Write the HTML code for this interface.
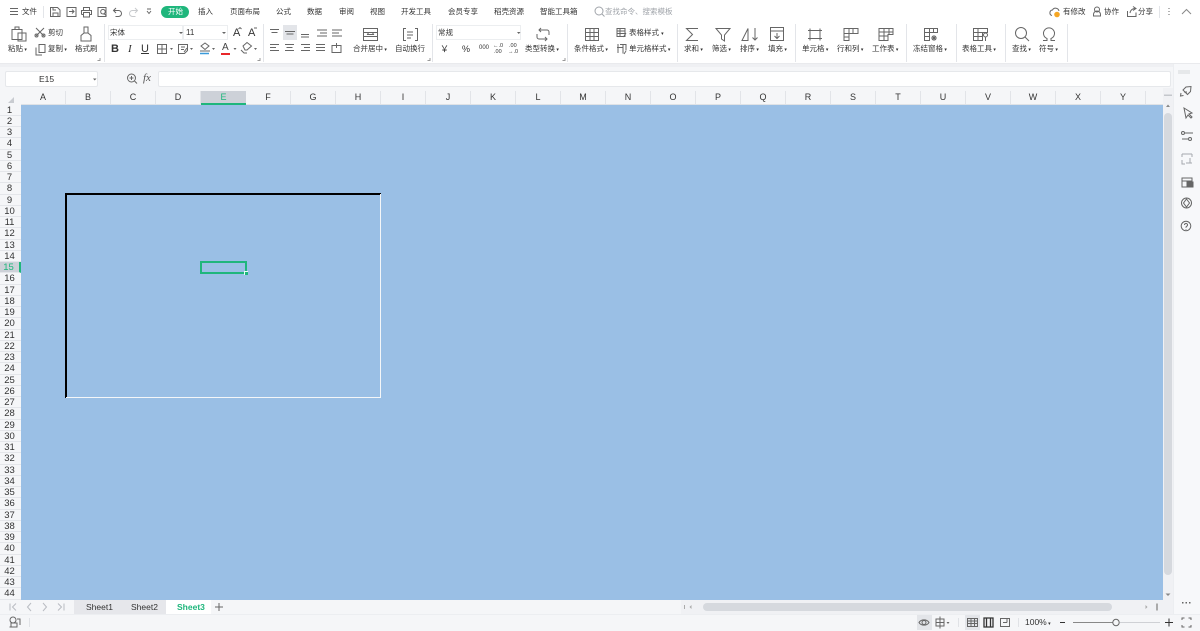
<!DOCTYPE html>
<html lang="zh">
<head>
<meta charset="utf-8">
<title>Sheet</title>
<style>
html{background:#f5f6f8}
html,body{margin:0;padding:0;width:1200px;height:631px;overflow:hidden}
body{position:relative;background:#f5f6f8;font-family:"Liberation Sans","Noto Sans CJK SC",sans-serif;filter:blur(.3px)}
div,span{position:absolute;box-sizing:border-box}
.t{white-space:nowrap;font-size:7.5px;line-height:12px;color:#333;height:12px}
.c{white-space:nowrap;font-size:9px;line-height:13px;color:#333;top:91px;width:45px;height:13px;text-align:center;border-right:1px solid #e2e4e8}
.r{white-space:nowrap;font-size:9.5px;line-height:11px;color:#333;left:0;width:21px;height:11.25px;text-align:center;padding-right:2px;background:#f5f6f8;border-bottom:1px solid #e4e6ea}
svg{position:absolute;left:0;top:0;fill:none;stroke:#666;stroke-width:1}
svg .f{fill:#666;stroke:none}
</style>
</head>
<body>
<div style="left:0;top:0;width:1200px;height:64px;background:#fff;border-bottom:1px solid #e9eaed"></div>
<div style="left:0;top:64px;width:1200px;height:3px;background:#eff0f3"></div>
<div style="left:161px;top:6px;width:28px;height:12px;border-radius:6px;background:#1fb67c"></div>
<span class="t" style="left:168px;top:6px;color:#fff">开始</span>
<span class="t" style="left:22px;top:6px">文件</span>
<span class="t" style="left:198px;top:6px">插入</span>
<span class="t" style="left:230px;top:6px">页面布局</span>
<span class="t" style="left:276px;top:6px">公式</span>
<span class="t" style="left:307px;top:6px">数据</span>
<span class="t" style="left:339px;top:6px">审阅</span>
<span class="t" style="left:370px;top:6px">视图</span>
<span class="t" style="left:401px;top:6px">开发工具</span>
<span class="t" style="left:448px;top:6px">会员专享</span>
<span class="t" style="left:494px;top:6px">稻壳资源</span>
<span class="t" style="left:540px;top:6px">智能工具箱</span>
<span class="t" style="left:605px;top:6px;color:#a0a4aa">查找命令、搜索模板</span>
<span class="t" style="left:1063px;top:6px">有修改</span>
<span class="t" style="left:1104px;top:6px">协作</span>
<span class="t" style="left:1138px;top:6px">分享</span>

<div style="left:283px;top:25px;width:14px;height:15px;background:#e3e5e9"></div>
<div style="left:108px;top:25px;width:75px;height:15px;background:#fff;border:1px solid #eceef0"></div>
<div style="left:183px;top:25px;width:45px;height:15px;background:#fff;border:1px solid #eceef0"></div>
<div style="left:436px;top:25px;width:85px;height:15px;background:#fff;border:1px solid #eceef0"></div>
<span class="t" style="left:110px;top:27px">宋体</span>
<span class="t" style="left:186px;top:27px;font-size:8px">11</span>
<span class="t" style="left:438px;top:27px">常规</span>

<span class="t" style="left:48px;top:27px">剪切</span>
<span class="t" style="left:629px;top:27px">表格样式 <small style="font-size:5px">▾</small></span>
<span class="t" style="left:8px;top:43px">粘贴<small style="font-size:5px"> ▾</small></span>
<span class="t" style="left:48px;top:43px">复制<small style="font-size:5px"> ▾</small></span>
<span class="t" style="left:75px;top:43px">格式刷</span>
<span class="t" style="left:353px;top:43px">合并居中<small style="font-size:5px"> ▾</small></span>
<span class="t" style="left:395px;top:43px">自动换行</span>
<span class="t" style="left:525px;top:43px">类型转换<small style="font-size:5px"> ▾</small></span>
<span class="t" style="left:574px;top:43px">条件格式<small style="font-size:5px"> ▾</small></span>
<span class="t" style="left:629px;top:43px">单元格样式<small style="font-size:5px"> ▾</small></span>
<span class="t" style="left:684px;top:43px">求和<small style="font-size:5px"> ▾</small></span>
<span class="t" style="left:712px;top:43px">筛选<small style="font-size:5px"> ▾</small></span>
<span class="t" style="left:740px;top:43px">排序<small style="font-size:5px"> ▾</small></span>
<span class="t" style="left:768px;top:43px">填充<small style="font-size:5px"> ▾</small></span>
<span class="t" style="left:802px;top:43px">单元格<small style="font-size:5px"> ▾</small></span>
<span class="t" style="left:837px;top:43px">行和列<small style="font-size:5px"> ▾</small></span>
<span class="t" style="left:872px;top:43px">工作表<small style="font-size:5px"> ▾</small></span>
<span class="t" style="left:913px;top:43px">冻结窗格<small style="font-size:5px"> ▾</small></span>
<span class="t" style="left:962px;top:43px">表格工具<small style="font-size:5px"> ▾</small></span>
<span class="t" style="left:1012px;top:43px">查找<small style="font-size:5px"> ▾</small></span>
<span class="t" style="left:1039px;top:43px">符号<small style="font-size:5px"> ▾</small></span>

<span class="t" style="left:111px;top:43px;font-size:11px;font-weight:bold;color:#333">B</span>
<span class="t" style="left:128px;top:43px;font-size:11px;font-style:italic;font-family:'Liberation Serif',serif">I</span>
<span class="t" style="left:141px;top:43px;font-size:11px;text-decoration:underline">U</span>
<span class="t" style="left:222px;top:42px;font-size:10px;color:#444">A</span>
<span class="t" style="left:233px;top:27px;font-size:11px">A</span>
<span class="t" style="left:248px;top:27px;font-size:11px">A</span>
<span class="t" style="left:440px;top:43px;font-size:9px">￥</span>
<span class="t" style="left:462px;top:43px;font-size:9px">%</span>
<span class="t" style="left:479px;top:42px;font-size:6px">000</span>
<span class="t" style="left:493px;top:40px;font-size:5.500px">←.0</span>
<span class="t" style="left:494px;top:46px;font-size:5.500px">.00</span>
<span class="t" style="left:509px;top:40px;font-size:5.500px">.00</span>
<span class="t" style="left:508px;top:46px;font-size:5.500px">→.0</span>

<!-- formula bar -->
<div style="left:5px;top:71px;width:93px;height:16px;background:#fff;border:1px solid #e6e8eb;border-radius:2px"></div>
<span class="t" style="left:39px;top:73px;font-size:8.500px">E15</span>
<span class="t" style="left:143px;top:72px;font-size:11px;font-style:italic;font-family:'Liberation Serif',serif;color:#555">fx</span>
<div style="left:158px;top:71px;width:1013px;height:16px;background:#fff;border:1px solid #e6e8eb;border-radius:2px"></div>

<!-- sheet -->
<div style="left:21px;top:105px;width:1142px;height:495px;background:#9abfe5"></div>
<div style="left:0;top:91px;width:1163px;height:13px;background:#f5f6f8"></div>
<div style="left:21px;top:104px;width:1142px;height:1px;background:#dfe2e6"></div>
<div style="left:201px;top:91px;width:45px;height:14px;background:#cdd1d8;border-bottom:2px solid #1fb67c"></div>

<span class="c" style="left:21px">A</span><span class="c" style="left:66px">B</span><span class="c" style="left:111px">C</span><span class="c" style="left:156px">D</span><span class="c" style="left:201px;color:#1fb67c;border:0">E</span><span class="c" style="left:246px">F</span><span class="c" style="left:291px">G</span><span class="c" style="left:336px">H</span><span class="c" style="left:381px">I</span><span class="c" style="left:426px">J</span><span class="c" style="left:471px">K</span><span class="c" style="left:516px">L</span><span class="c" style="left:561px">M</span><span class="c" style="left:606px">N</span><span class="c" style="left:651px">O</span><span class="c" style="left:696px">P</span><span class="c" style="left:741px">Q</span><span class="c" style="left:786px">R</span><span class="c" style="left:831px">S</span><span class="c" style="left:876px">T</span><span class="c" style="left:921px">U</span><span class="c" style="left:966px">V</span><span class="c" style="left:1011px">W</span><span class="c" style="left:1056px">X</span><span class="c" style="left:1101px">Y</span>

<span class="r" style="top:104.500px">1</span><span class="r" style="top:115.750px">2</span><span class="r" style="top:127px">3</span><span class="r" style="top:138.250px">4</span><span class="r" style="top:149.500px">5</span><span class="r" style="top:160.750px">6</span><span class="r" style="top:172px">7</span><span class="r" style="top:183.250px">8</span><span class="r" style="top:194.500px">9</span><span class="r" style="top:205.750px">10</span><span class="r" style="top:217px">11</span><span class="r" style="top:228.250px">12</span><span class="r" style="top:239.500px">13</span><span class="r" style="top:250.750px">14</span><span class="r" style="top:262px;background:#cdd1d8;color:#1fb67c;border-right:2px solid #1fb67c">15</span><span class="r" style="top:273.250px">16</span><span class="r" style="top:284.500px">17</span><span class="r" style="top:295.750px">18</span><span class="r" style="top:307px">19</span><span class="r" style="top:318.250px">20</span><span class="r" style="top:329.500px">21</span><span class="r" style="top:340.750px">22</span><span class="r" style="top:352px">23</span><span class="r" style="top:363.250px">24</span><span class="r" style="top:374.500px">25</span><span class="r" style="top:385.750px">26</span><span class="r" style="top:397px">27</span><span class="r" style="top:408.250px">28</span><span class="r" style="top:419.500px">29</span><span class="r" style="top:430.750px">30</span><span class="r" style="top:442px">31</span><span class="r" style="top:453.250px">32</span><span class="r" style="top:464.500px">33</span><span class="r" style="top:475.750px">34</span><span class="r" style="top:487px">35</span><span class="r" style="top:498.250px">36</span><span class="r" style="top:509.500px">37</span><span class="r" style="top:520.750px">38</span><span class="r" style="top:532px">39</span><span class="r" style="top:543.250px">40</span><span class="r" style="top:554.500px">41</span><span class="r" style="top:565.750px">42</span><span class="r" style="top:577px">43</span><span class="r" style="top:588.250px">44</span>

<!-- borders in sheet -->
<div style="left:65px;top:193px;width:316px;height:1.500px;background:#000"></div>
<div style="left:65px;top:193px;width:1.500px;height:205px;background:#000"></div>
<div style="left:380px;top:194px;width:1px;height:204px;background:#f4f6f8"></div>
<div style="left:66px;top:397px;width:315px;height:1px;background:#f4f6f8"></div>
<div style="left:200px;top:261px;width:47px;height:13px;border:2px solid #1fb67c"></div>
<div style="left:244px;top:271px;width:4px;height:4px;background:#1fb67c;border:1px solid #e8fff5;border-width:1px 0 0 1px"></div>

<!-- scrollbars and side -->
<div style="left:1163px;top:88px;width:10px;height:526px;background:#f0f1f4"></div>
<div style="left:1164px;top:113px;width:8px;height:462px;background:#d6d9de;border-radius:4px"></div>
<div style="left:1173px;top:64px;width:27px;height:550px;background:#f7f8fa;border-left:1px solid #eceef1"></div>

<!-- tab bar -->
<div style="left:0;top:600px;width:1163px;height:14px;background:#f5f6f8"></div>
<div style="left:74px;top:600px;width:92px;height:14px;background:#e6e7eb"></div>
<div style="left:166px;top:600px;width:45px;height:14px;background:#fff"></div>
<span class="t" style="left:86px;top:601px;font-size:8.500px">Sheet1</span>
<span class="t" style="left:131px;top:601px;font-size:8.500px">Sheet2</span>
<span class="t" style="left:177px;top:601px;font-size:8.500px;color:#1fb67c;font-weight:bold">Sheet3</span>
<div style="left:681px;top:600px;width:482px;height:14px;background:#f0f1f4"></div>
<div style="left:703px;top:603px;width:409px;height:8px;background:#d6d9de;border-radius:4px"></div>
<div style="left:0;top:614px;width:1200px;height:17px;background:#f5f6f8;border-top:1px solid #eceef1"></div>
<div style="left:917px;top:615px;width:15px;height:15px;background:#e3e5e9"></div>
<div style="left:965px;top:615px;width:15px;height:15px;background:#e3e5e9"></div>
<span class="t" style="left:1025px;top:616px;font-size:8.500px">100%<small style="font-size:5px"> ▾</small></span>

<svg width="1200" height="631" viewBox="0 0 1200 631">
<!-- title row -->
<path d="M10 8.500h8M10 11.500h8M10 14.500h8"/>
<path stroke="#e3e5e9" d="M43.500 6v12M104.500 24v38M263.500 24v38M432.500 24v38M567.500 24v38M677.500 24v38M795.500 24v38M906.500 24v38M956.500 24v38M1005.500 24v38M1067.500 24v38M1159.500 6v12"/>
<path d="M50.500 7.500h7l2.500 2.500v6.500h-9.500zM53 16.500v-3.500h5v3.500M53 7.500v2.500h3"/>
<path d="M67 7.500h9v9h-9zM69 11.500h5M72 9.500l2 2-2 2"/>
<path d="M83.500 10.500v-3h6v3M81.500 14.500v-4h10v4h-2M83.500 14.500h-2M83.500 12.500h6v4.500h-6z"/>
<path d="M98 7.500h8v9h-8zM103 14a2.300 2.300 0 1 0-.1 0M104 13.500l2.500 2.500"/>
<path d="M116 8l-2.500 2.500 2.500 2.500M113.500 10.500h5a3 3 0 0 1 0 6h-3"/>
<path stroke="#c8cacd" d="M135 8l2.500 2.500-2.500 2.500M137.500 10.500h-5a3 3 0 0 0 0 6h3"/>
<path d="M147 9h4M147 11l2 2.500 2-2.500"/>
<circle cx="599" cy="11" r="4" stroke="#a0a4aa"/><path stroke="#a0a4aa" d="M602 14l2.500 2.500"/>
<path d="M1052 15.500a2.800 2.800 0 0 1 .5-5.500 3.500 3.500 0 0 1 6.500 1"/><circle class="f" style="fill:#f5a623" cx="1057" cy="14.500" r="2.800"/>
<circle cx="1097" cy="9.500" r="2.500"/><path d="M1093.500 16v-1.500a3.500 3.500 0 0 1 7 0v1.500h-7z"/>
<path d="M1127.500 11v5.500h8.500v-4M1130 13c.5-3 2.500-4.500 5.500-4.500M1133 6.500l3 2-3 2"/>
<path class="f" d="M1168.500 8h1v1h-1zM1168.500 11h1v1h-1zM1168.500 14h1v1h-1z"/>
<path stroke="#888" d="M1182 14l4.500-4.500 4.500 4.500"/>

<!-- clipboard section -->
<path d="M12 29.500h10v10h-10zM15 29.500v-2.500h4v2.500M18 33h8v8h-8z"/>
<path d="M36 28l8 8M44 28l-8 8"/><circle cx="36.500" cy="35.500" r="1.500"/><circle cx="43.500" cy="35.500" r="1.500"/>
<path d="M39 44.500h6v8h-6zM36 47.500v7.500h6"/>
<path d="M84 27h4v6h-4zM84 33l-3 2.500v5.500h10v-5.500L88 33z"/>
<!-- font section -->
<path class="f" d="M179 32h4l-2 2zM222 32h4l-2 2zM517 32h3.500l-1.750 2z"/>
<path d="M157.500 44.500h9v9h-9zM162 44.500v9M157.500 49h9"/>
<path d="M178.500 44.500h9v6l-3 3h-6zM181 47h4M181 49.500h3M184 52l3-4"/>
<path d="M201 46l4-3 4 3-4 3.500zM200 51h10"/>
<path stroke="#3b9ad9" stroke-width="1.500" d="M200 53.500h9"/>
<path stroke="#e8262a" stroke-width="2" d="M221 54h9"/>
<path d="M243 46l4-3.500 4.500 3.500-4.500 4h-2zM241 50l3 3h3"/>
<path class="f" d="M170 48h3l-1.500 2zM190 48h3l-1.500 2zM212 48h3l-1.500 2zM233.500 48h3l-1.500 2zM254 48h3l-1.500 2z"/>
<path d="M240 27.500l1.500 1.500M240 27.500l-1.500 1.500M254 28h3"/>
<!-- align section -->
<path d="M270 29.500h9M271.500 32.500h6M285 31.500h10M286.500 34h7M301 34.500h8M301 37h8M317 30h10M320 33h7M317 36h10M332 30h10M332 33h7M332 36h10"/>
<path d="M270 44.500h9M270 47.500h6M270 50.500h9M285 44.500h9M286.500 47.500h6M285 50.500h9M301 44.500h9M304 47.500h6M301 50.500h9M316 44.500h9M316 47.500h9M316 50.500h9M332 45.500h9v7h-9zM336.500 43v5"/>
<!-- merge -->
<path d="M363.500 28.500h14v12h-14zM363.500 32.500h14M363.500 36.500h14M367 34.500h7M367 34.500l1.500-1.200M374 34.500l-1.500-1.200"/>
<path d="M406 28.500h-2.500v12h2.500M415 28.500h2.500v12h-2.500M407 32h6M407 35h6M407 38h4"/>
<!-- type conversion -->
<path d="M539 30h8a2 2 0 0 1 2 2v3M541 28l-2 2 2 2M547 39h-8a2 2 0 0 1-2-2v-3M545 41l2-2-2-2"/>
<!-- styles -->
<path d="M585.500 28.500h13v12h-13zM585.500 32.500h13M585.500 36.500h13M590 28.500v12M594 28.500v12"/>
<path d="M617 28.500h8v8h-8zM617 31h8M617 33.500h8M620 28.500v8M626 33l-2.500 4"/>
<path d="M620 44.500h6v6M617 47.500h6v6M618 44v9M623 44v4M624 54l2-3"/>
<!-- sum etc -->
<path d="M698 28.500h-11.500l6 6-6 6h11.500"/>
<path d="M716 28.500h14l-5.500 6.500v6l-3-2v-4z"/>
<path d="M742 40.500l6-12v12zM755 28v12M752.500 37.500l2.500 2.500 2.500-2.500"/>
<path d="M770.500 27.500h13v13h-13zM770.500 31h13M777 33v5M774.500 36l2.500 2.500 2.500-2.500"/>
<!-- cell, row col, sheet -->
<path d="M808 30.500h14M808 38.500h14M810 28.500v12M820 28.500v12"/>
<path d="M844 28.500h14v5h-14zM844 28.500v12h5v-12M849 33.500v7M844 37h5M853 28.500v5"/>
<path d="M879 28.500h14v6h-5v6h-9zM879 32h14M879 36h9M884 28.500v12M889 28.500v6"/>
<!-- freeze -->
<path d="M924.500 28.500h13v4h-8v8h-5zM924.500 32.500h5M924.500 36.500h5M929.500 28.500v4M933.500 28.500v4M934 35v6M931 38h6M932 36l4 4M936 36l-4 4"/>
<!-- table tools -->
<path d="M973.500 28.500h14v4h-5v8h-9zM973.500 32.500h9M973.500 36.500h9M978 28.500v12"/>
<circle cx="985.500" cy="35" r="2"/><path d="M985.500 37v4"/>
<!-- find, symbol -->
<circle cx="1021" cy="33" r="5.500"/><path d="M1025 37l4 4"/>
<path d="M1043 40.500h4v-2a5.500 5.500 0 1 1 4 0v2h4"/>
<!-- dialog launchers -->
<path stroke="#999" d="M100 58v2.500h-2.500M260 58v2.500h-2.500M430 58v2.500h-2.500M565 58v2.500h-2.500"/>

<!-- formula bar icons -->
<path class="f" d="M93 78.500h3.500l-1.750 2z"/>
<circle cx="131.500" cy="78" r="4"/><path d="M134.500 81l2.500 2.500M129.500 78h4M131.500 76v4"/>
<path stroke="#d5d7db" d="M1178 71h12M1178 73h12"/>
<path class="f" style="fill:#c9ccd1" d="M8 103l6-6v6z"/>

<!-- side icons -->
<path d="M1183 90l3-3 5-.5-.5 5-3 3-4.500-4.500zM1181 93l-.5 3 3-.5M1184 92h3"/>
<path d="M1184 108l2 10 2-3 3 3 1-1-3-3 3-1z"/>
<circle cx="1183" cy="133" r="1.500"/><path d="M1185 133h8"/><circle cx="1190" cy="139" r="1.500"/><path d="M1182 139h6"/>
<path stroke="#a6a9ae" d="M1182 154h10M1182 154v3M1182 160v4h3M1192 154v3M1186 163h6M1190 158v5"/>
<path d="M1182 178h10v9h-10zM1182 181h10"/><rect x="1187" y="182" width="6" height="5" fill="#666"/>
<circle cx="1186.500" cy="203" r="5"/><path d="M1186.500 199l3 4-3 4-3-4z"/>
<circle cx="1186" cy="226" r="4.800"/><path d="M1184.500 225a1.500 1.500 0 1 1 2.300 1.200l-.8 .8v.8M1186 229v.6"/>
<path class="f" style="fill:#c4c7cc" d="M1164 94.500h8v1.500h-8z"/>
<path class="f" style="fill:#888" d="M1168 104.500l-2 2.500h4z"/>
<path class="f" style="fill:#888" d="M1165.500 593.500h5l-2.500 2.500z"/>
<path class="f" d="M1182 602h1.500v1.500h-1.500zM1185.500 602h1.500v1.500h-1.500zM1189 602h1.500v1.500h-1.500z"/>

<!-- tab nav -->
<path stroke="#b9bcc2" d="M10 603.500v7M16 603.500l-3.500 3.500 3.500 3.500M31 603l-3.500 4 3.500 4M43 603l3.500 4-3.500 4M58 603.500l3.500 3.500-3.500 3.500M64 603.500v7"/>
<path stroke="#666" d="M219 603v8M215 607h8"/>
<path class="f" style="fill:#aaa" d="M1145.500 605l2 2-2 2zM684 605h1v4h-1zM691.500 605l-2 2 2 2zM1156 603.500h2v7h-2z"/>

<!-- status bar -->
<circle cx="13" cy="620" r="3"/><path d="M11 623h6v4h-6zM17 619h3v6M9.500 627h8"/>
<path stroke="#e0e2e6" d="M29.500 618v9M958.500 618v9M1018.500 618v9"/>
<path d="M919 622.500c2-3.500 8-3.500 10 0-2 3.500-8 3.500-10 0z"/><circle cx="924" cy="622.500" r="2"/>
<path d="M936 619h8v7h-8zM940 616.500v12M936 622.500h8"/>
<path class="f" d="M946.500 622h3l-1.500 2z"/>
<path d="M967.500 618.500h10v8h-10zM967.500 621h10M967.500 623.500h10M971 618.500v8M974.500 618.500v8"/>
<path stroke="#333" stroke-width="1.300" d="M984 618h9v9h-9zM986.500 618v9M990.500 618v9"/>
<path d="M1000.500 618.500h9v8h-9zM1003 622.500h4M1007 618.500v4"/>
<path stroke="#333" d="M1060 622.500h5M1165 622.500h8M1169 618.500v8"/>
<path stroke="#888" d="M1073 622.500h40"/><path stroke="#cfd1d5" d="M1120 622.500h40"/>
<circle cx="1116" cy="622.500" r="3.200" fill="#f5f6f8"/>
<path d="M1182 620v-2h2.500M1191 620v-2h-2.500M1182 625v2h2.500M1191 625v2h-2.500"/>
</svg>
</body>
</html>
